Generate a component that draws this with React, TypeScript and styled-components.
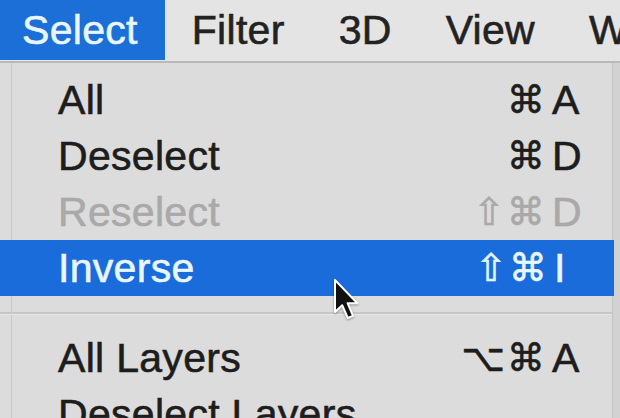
import styled, { createGlobalStyle } from "styled-components";

const GlobalStyle = createGlobalStyle`
  html, body {
    margin: 0;
    padding: 0;
    width: 620px;
    height: 418px;
    overflow: hidden;
    background: #cfcfcf;
  }
  * {
    box-sizing: border-box;
  }
`;

const Screen = styled.div`
  position: relative;
  width: 620px;
  height: 418px;
  overflow: hidden;
  font-family: "Liberation Sans", Arial, "DejaVu Sans", sans-serif;
  background: #d2d2d2;
  -webkit-text-stroke: 0.6px currentColor;
`;

const MenuBar = styled.div`
  display: flex;
  align-items: stretch;
  height: 63px;
  background: #e4e4e4;
  border-bottom: 2px solid #b9b9b9;
  padding-bottom: 1px;
  white-space: nowrap;
`;

const Title = styled.div<{ $active?: boolean; $first?: boolean }>`
  display: flex;
  align-items: center;
  padding: 0 27px 0 ${(p) => (p.$first ? "22px" : "27px")};
  font-size: 41px;
  letter-spacing: 0.3px;
  color: ${(p) => (p.$active ? "#e8f6ff" : "#222")};
  background: ${(p) => (p.$active ? "#1b6fd6" : "transparent")};
`;

const Menu = styled.div`
  width: 613px;
  padding-top: 9px;
  background: linear-gradient(
      to right,
      transparent 11px,
      #c8c8c8 11px,
      #c8c8c8 12px,
      transparent 12px
    ),
    #dcdcdc;
  border-right: 1px solid #c4c4c4;
`;

const Item = styled.div<{ $active?: boolean; $disabled?: boolean }>`
  display: flex;
  align-items: center;
  justify-content: space-between;
  height: 56px;
  padding: 0 26px 0 58px;
  font-size: 41px;
  white-space: nowrap;
  color: ${(p) => (p.$active ? "#e8f6ff" : p.$disabled ? "#a9a9a9" : "#1d1d1d")};
  background: ${(p) => (p.$active ? "#1a6cdb" : "transparent")};
  margin-right: ${(p) => (p.$active ? "-2px" : "0")};
`;

const Label = styled.span`
  letter-spacing: 0.3px;
`;

const Shortcut = styled.span`
  display: flex;
  align-items: center;
`;

const Mods = styled.span`
  font-family: "DejaVu Sans", sans-serif;
  font-size: 38px;
  letter-spacing: 2px;
  margin-right: 5px;
`;

const Key = styled.span`
  width: 34px;
  text-align: left;
`;

const Separator = styled.div`
  height: 34px;
  display: flex;
  align-items: center;
  &::after {
    content: "";
    flex: 1;
    height: 2px;
    background: #c6c6c6;
    border-bottom: 1px solid #e6e6e6;
  }
`;

const Cursor = styled.svg`
  position: absolute;
  left: 333px;
  top: 278px;
  filter: drop-shadow(0 1px 1px rgba(0, 0, 0, 0.35));
`;

type Row = {
  label: string;
  mods?: string;
  key?: string;
  active?: boolean;
  disabled?: boolean;
  sep?: boolean;
};

const rows: Row[] = [
  { label: "All", mods: "⌘", key: "A" },
  { label: "Deselect", mods: "⌘", key: "D" },
  { label: "Reselect", mods: "⇧⌘", key: "D", disabled: true },
  { label: "Inverse", mods: "⇧⌘", key: "I", active: true },
  { label: "", sep: true },
  { label: "All Layers", mods: "⌥⌘", key: "A" },
  { label: "Deselect Layers" },
];

function App() {
  return (
    <Screen>
      <GlobalStyle />
      <MenuBar>
        <Title $active $first>
          Select
        </Title>
        <Title>Filter</Title>
        <Title>3D</Title>
        <Title>View</Title>
        <Title>Window</Title>
      </MenuBar>
      <Menu>
        {rows.map((row, i) =>
          row.sep ? (
            <Separator key={i} />
          ) : (
            <Item key={i} $active={row.active} $disabled={row.disabled}>
              <Label>{row.label}</Label>
              {row.key && (
                <Shortcut>
                  <Mods>{row.mods}</Mods>
                  <Key>{row.key}</Key>
                </Shortcut>
              )}
            </Item>
          )
        )}
      </Menu>
      <Cursor width="32" height="46" viewBox="0 0 16 23">
        <path
          d="M1 1 L1 17 L4.6 13.6 L7.4 20 L10 18.9 L7.3 12.6 L12.2 12.6 Z"
          fill="#111"
          stroke="#fff"
          strokeWidth="1"
          strokeLinejoin="round"
        />
      </Cursor>
    </Screen>
  );
}

export default App;
